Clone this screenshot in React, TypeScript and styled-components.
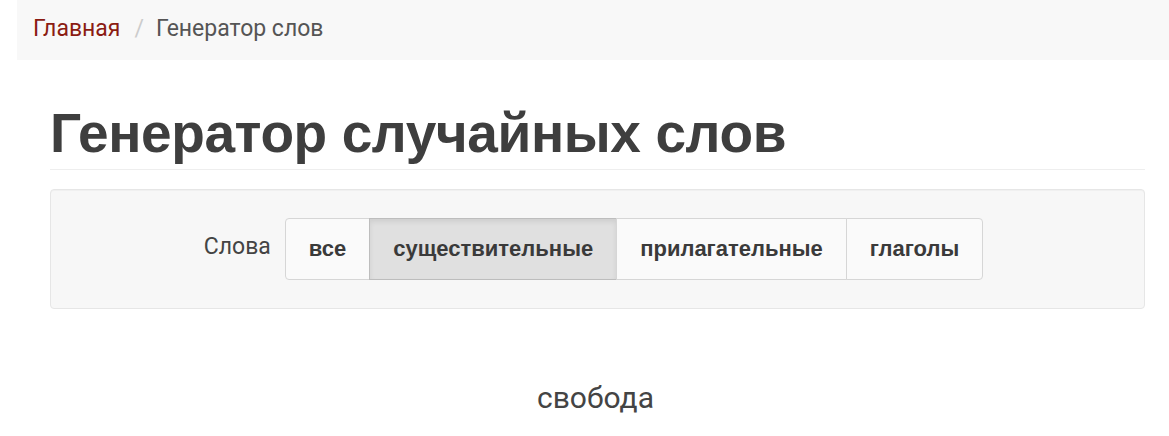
import React, { useState } from 'react';
import styled, { createGlobalStyle } from 'styled-components';

const GlobalStyle = createGlobalStyle`
  html, body {
    margin: 0;
    padding: 0;
    background: #ffffff;
    font-family: Roboto, "Liberation Sans", Arial, sans-serif;
    color: #444;
  }
  * { box-sizing: border-box; }
`;

const Page = styled.div`
  width: 1169px;
  height: 436px;
  overflow: hidden;
`;

const Breadcrumb = styled.nav`
  margin: 0 0 0 17px;
  padding: 0 16px 4px;
  height: 60px;
  background: #f8f8f8;
  display: flex;
  align-items: center;
  font-size: 23px;
`;

const Crumb = styled.span<{ $active?: boolean }>`
  color: ${p => (p.$active ? '#555' : '#8b1c13')};
`;

const Divider = styled.span`
  color: #ccc;
  padding: 0 12px 0 14px;
`;

const Container = styled.div`
  margin: 0 24px 0 50px;
`;

const Title = styled.h1`
  margin: 42px 0 0;
  padding-bottom: 5px;
  font-family: "Liberation Sans", Arial, sans-serif;
  font-weight: 700;
  font-size: 55px;
  line-height: 62px;
  letter-spacing: -0.4px;
  color: #3e3e3e;
  border-bottom: 1px solid #eee;
`;

const Well = styled.div`
  margin-top: 19px;
  height: 120px;
  background: #f7f7f7;
  border: 1px solid #e6e6e6;
  border-radius: 4px;
  box-shadow: inset 0 1px 1px rgba(0, 0, 0, 0.03);
  display: flex;
  align-items: center;
  justify-content: center;
  gap: 14px;
  padding-right: 8px;
`;

const Label = styled.span`
  font-size: 23px;
  color: #444;
  margin-top: -6px;
`;

const Group = styled.div`
  display: flex;
`;

const Option = styled.button<{ $active?: boolean }>`
  height: 62px;
  padding: 0 23px;
  font-family: "Liberation Sans", Arial, sans-serif;
  font-weight: 700;
  font-size: 22px;
  color: #3a3a3a;
  background: ${p => (p.$active ? '#e0e0e0' : '#fafafa')};
  border: 1px solid ${p => (p.$active ? '#bdbdbd' : '#d6d6d6')};
  box-shadow: ${p => (p.$active ? 'inset 0 3px 5px rgba(0,0,0,0.08)' : 'none')};
  margin-left: -1px;
  cursor: pointer;
  &:first-child {
    margin-left: 0;
    border-radius: 4px 0 0 4px;
  }
  &:last-child {
    border-radius: 0 4px 4px 0;
  }
`;

const Result = styled.div`
  margin-top: 71px;
  text-align: center;
  font-size: 30px;
  color: #444;
  padding-right: 4px;
`;

const options = ['все', 'существительные', 'прилагательные', 'глаголы'];

export default function App() {
  const [active, setActive] = useState(1);
  return (
    <Page>
      <GlobalStyle />
      <Breadcrumb>
        <Crumb>Главная</Crumb>
        <Divider>/</Divider>
        <Crumb $active>Генератор слов</Crumb>
      </Breadcrumb>
      <Container>
        <Title>Генератор случайных слов</Title>
        <Well>
          <Label>Слова</Label>
          <Group>
            {options.map((o, i) => (
              <Option key={o} $active={i === active} onClick={() => setActive(i)}>
                {o}
              </Option>
            ))}
          </Group>
        </Well>
        <Result>свобода</Result>
      </Container>
    </Page>
  );
}
